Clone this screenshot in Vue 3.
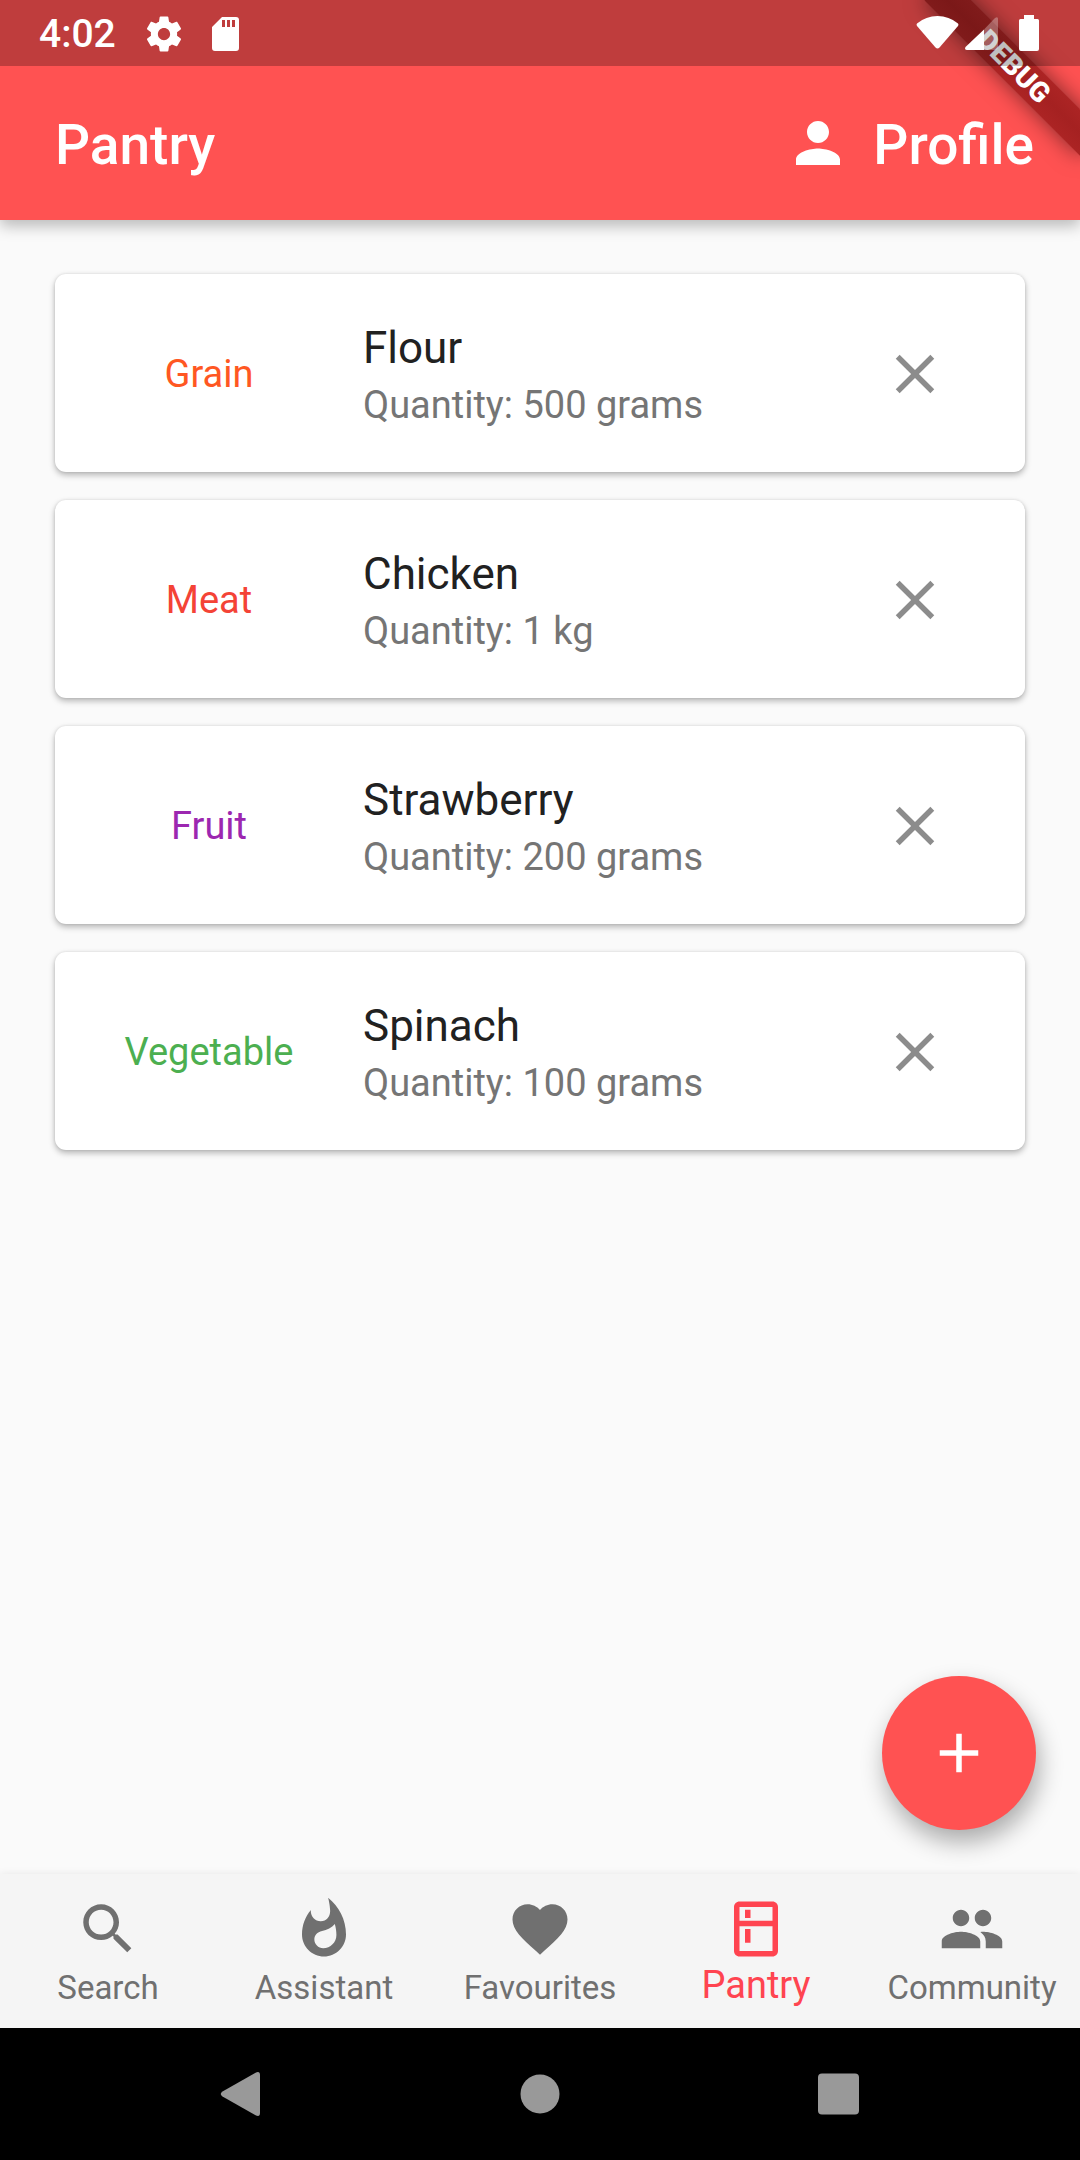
<script setup>
import { ref } from 'vue'

const items = ref([
  { category: 'Grain', tone: 'grain', name: 'Flour', quantity: '500 grams' },
  { category: 'Meat', tone: 'meat', name: 'Chicken', quantity: '1 kg' },
  { category: 'Fruit', tone: 'fruit', name: 'Strawberry', quantity: '200 grams' },
  { category: 'Vegetable', tone: 'vegetable', name: 'Spinach', quantity: '100 grams' },
])

const tabs = [
  {
    label: 'Search',
    icon: 'M15.5 14h-.79l-.28-.27C15.41 12.59 16 11.11 16 9.5 16 5.91 13.09 3 9.5 3S3 5.91 3 9.5 5.91 16 9.5 16c1.61 0 3.09-.59 4.23-1.57l.27.28v.79l5 4.99L20.49 19l-4.99-5zm-6 0C7.01 14 5 11.99 5 9.5S7.01 5 9.5 5 14 7.01 14 9.5 11.99 14 9.5 14z',
  },
  {
    label: 'Assistant',
    icon: 'M13.5.67s.74 2.65.74 4.8c0 2.06-1.35 3.73-3.41 3.73-2.07 0-3.63-1.67-3.63-3.73l.03-.36C5.21 7.51 4 10.62 4 14c0 4.42 3.58 8 8 8s8-3.58 8-8C20 8.61 17.41 3.8 13.5.67zM11.71 19c-1.78 0-3.22-1.4-3.22-3.14 0-1.62 1.05-2.76 2.81-3.12 1.77-.36 3.6-1.21 4.62-2.58.39 1.29.59 2.65.59 4.04 0 2.65-2.15 4.8-4.8 4.8z',
  },
  {
    label: 'Favourites',
    icon: 'M12 21.35l-1.45-1.32C5.4 15.36 2 12.28 2 8.5 2 5.42 4.42 3 7.5 3c1.74 0 3.41.81 4.5 2.09C13.09 3.81 14.76 3 16.5 3 19.58 3 22 5.42 22 8.5c0 3.78-3.4 6.86-8.55 11.54L12 21.35z',
  },
  {
    label: 'Pantry',
    active: true,
    icon: 'M18 2.01L6 2c-1.1 0-2 .89-2 2v16c0 1.1.9 2 2 2h12c1.1 0 2-.9 2-2V4c0-1.11-.9-1.99-2-1.99zM18 20H6v-9.02h12V20zm0-11H6V4h12v5zM8 5h2v3H8zm0 7h2v5H8z',
  },
  {
    label: 'Community',
    icon: 'M16 11c1.66 0 2.99-1.34 2.99-3S17.66 5 16 5s-3 1.34-3 3 1.34 3 3 3zm-8 0c1.66 0 2.99-1.34 2.99-3S9.66 5 8 5 5 6.34 5 8s1.34 3 3 3zm0 2c-2.33 0-7 1.17-7 3.5V19h14v-2.5c0-2.33-4.67-3.5-7-3.5zm8 0c-.29 0-.62.02-.97.05 1.16.84 1.97 1.97 1.97 3.45V19h6v-2.5c0-2.33-4.67-3.5-7-3.5z',
  },
]

function remove(index) {
  items.value.splice(index, 1)
}
</script>

<template>
  <div class="screen">
    <header class="top">
      <div class="app-bar">
        <h1 class="title">Pantry</h1>
        <button class="profile" type="button">
          <svg class="icon" viewBox="0 0 24 24" aria-hidden="true">
            <path d="M12 12c2.21 0 4-1.79 4-4s-1.79-4-4-4-4 1.79-4 4 1.79 4 4 4zm0 2c-2.67 0-8 1.34-8 4v2h16v-2c0-2.66-5.33-4-8-4z" />
          </svg>
          <span class="profile-label">Profile</span>
        </button>
      </div>
      <div class="ribbon-corner"><span class="ribbon">DEBUG</span></div>
      <div class="status-bar">
        <div class="status-left">
          <time class="clock">4:02</time>
          <svg class="status-icon" viewBox="0 0 24 24" aria-hidden="true">
            <path d="M19.43 12.98c.04-.32.07-.64.07-.98s-.03-.66-.07-.98l2.11-1.65c.19-.15.24-.42.12-.64l-2-3.46c-.12-.22-.39-.3-.61-.22l-2.49 1c-.52-.4-1.08-.73-1.69-.98l-.38-2.65C14.46 2.18 14.25 2 14 2h-4c-.25 0-.46.18-.49.42l-.38 2.65c-.61.25-1.17.59-1.69.98l-2.49-1c-.23-.09-.49 0-.61.22l-2 3.46c-.13.22-.07.49.12.64l2.11 1.65c-.04.32-.07.65-.07.98s.03.66.07.98l-2.11 1.65c-.19.15-.24.42-.12.64l2 3.46c.12.22.39.3.61.22l2.49-1c.52.4 1.08.73 1.69.98l.38 2.65c.03.24.24.42.49.42h4c.25 0 .46-.18.49-.42l.38-2.65c.61-.25 1.17-.59 1.69-.98l2.49 1c.23.09.49 0 .61-.22l2-3.46c.12-.22.07-.49-.12-.64l-2.11-1.65zM12 15.5c-1.93 0-3.5-1.57-3.5-3.5s1.57-3.5 3.5-3.5 3.5 1.57 3.5 3.5-1.57 3.5-3.5 3.5z" />
          </svg>
          <svg class="status-icon" viewBox="0 0 42 42" aria-hidden="true">
            <path fill-rule="evenodd" d="M18 4h14q3 0 3 3v28q0 3-3 3H11q-3 0-3-3V14zM18 7v7h3V7zM23 7v7h3V7zM28 7v7h3V7z" />
          </svg>
        </div>
        <svg class="status-right" viewBox="0 0 124 38" aria-hidden="true">
          <path d="M1 8.500Q10 1 21.500 1T42 8.500Q43 9.500 42 11L23.500 32.500Q21.500 34.500 19.500 32.500L1 11Q0 9.500 1 8.500z" />
          <path opacity=".3" d="M68 14.500L79 3Q82 1 82 4V32q0 3-3 3H68z" />
          <path d="M68 14.500V35H51q-3-.5-1.500-3z" />
          <path d="M108 0h10v4h3.500q1.500 0 1.500 1.500V34q0 2-2 2h-16q-2 0-2-2V5.500q0-1.500 1.500-1.500h3.500z" />
        </svg>
      </div>
    </header>

    <main class="content">
      <ul class="list">
        <li v-for="(item, i) in items" :key="item.name" class="card">
          <span class="category" :class="item.tone">{{ item.category }}</span>
          <div class="details">
            <h2 class="name">{{ item.name }}</h2>
            <p class="quantity">Quantity: {{ item.quantity }}</p>
          </div>
          <button class="remove" type="button" :aria-label="`Remove ${item.name}`" @click="remove(i)">
            <svg class="icon" viewBox="0 0 24 24" aria-hidden="true">
              <path d="M19 6.410L17.590 5 12 10.590 6.410 5 5 6.410 10.590 12 5 17.590 6.410 19 12 13.410 17.590 19 19 17.590 13.410 12z" />
            </svg>
          </button>
        </li>
      </ul>
      <button class="fab" type="button" aria-label="Add item">
        <svg class="icon" viewBox="0 0 24 24" aria-hidden="true">
          <path d="M19 13h-6v6h-2v-6H5v-2h6V5h2v6h6v2z" />
        </svg>
      </button>
    </main>

    <nav class="tabs">
      <a v-for="tab in tabs" :key="tab.label" class="tab" :class="{ active: tab.active }" href="#">
        <svg class="icon" viewBox="0 0 24 24" aria-hidden="true"><path :d="tab.icon" /></svg>
        <span class="tab-label">{{ tab.label }}</span>
      </a>
    </nav>

    <footer class="system-nav">
      <button class="system-button" type="button" aria-label="Back">
        <svg class="system-icon" viewBox="0 0 48 48" aria-hidden="true">
          <path d="M5.500 21.500L39 2.500Q43 1 43 5V43Q43 47 39 45.500L5.500 26.500Q2 24 5.500 21.500z" />
        </svg>
      </button>
      <button class="system-button" type="button" aria-label="Home">
        <svg class="system-icon" viewBox="0 0 48 48" aria-hidden="true"><circle cx="24" cy="24" r="19.500" /></svg>
      </button>
      <button class="system-button" type="button" aria-label="Recent apps">
        <svg class="system-icon" viewBox="0 0 48 48" aria-hidden="true"><rect x="3" y="3.500" width="41" height="41" rx="4" /></svg>
      </button>
    </footer>
  </div>
</template>

<style>
body {
  margin: 0;
  background: #fafafa;
}
</style>

<style scoped>
.screen {
  display: flex;
  flex-direction: column;
  min-height: 100vh;
  font-family: Roboto, "Liberation Sans", sans-serif;
  background: #fafafa;
}

button {
  padding: 0;
  border: 0;
  background: none;
  font: inherit;
  color: inherit;
  cursor: pointer;
}

svg {
  display: block;
  fill: currentColor;
}

.icon {
  width: 66px;
  height: 66px;
}

.top {
  position: relative;
  z-index: 1;
  padding-top: 66px;
  color: #fff;
  background: #ff5252;
  box-shadow: 0 6px 14px rgba(0, 0, 0, 0.26);
}

.status-bar {
  position: absolute;
  inset: 0 0 auto;
  box-sizing: border-box;
  display: flex;
  align-items: center;
  justify-content: space-between;
  height: 66px;
  padding: 2px 40px 0 39px;
  background: rgba(0, 0, 0, 0.25);
}

.status-left {
  display: flex;
  align-items: center;
  gap: 19px;
}

.clock {
  margin-right: 8px;
  font-size: 39px;
  font-weight: 500;
}

.status-icon {
  width: 42px;
  height: 42px;
}

.status-right {
  width: 124px;
  height: 38px;
}

.app-bar {
  display: flex;
  align-items: center;
  justify-content: space-between;
  height: 154px;
  padding: 0 46px 0 55px;
}

.title {
  margin: 0;
  padding-top: 4px;
  font-size: 55px;
  font-weight: 500;
}

.profile {
  display: flex;
  align-items: center;
  gap: 22px;
  font-size: 55px;
  font-weight: 500;
}

.profile-label {
  padding-top: 4px;
}

.ribbon-corner {
  position: absolute;
  top: 0;
  right: 0;
  width: 220px;
  height: 220px;
  overflow: hidden;
  pointer-events: none;
}

.ribbon {
  position: absolute;
  top: 50px;
  right: -44px;
  width: 220px;
  font-size: 28px;
  font-weight: 900;
  line-height: 33px;
  text-align: center;
  background: linear-gradient(#ac2424, #a52121 50%, #ac2424);
  box-shadow: 0 0 22px rgba(0, 0, 0, 0.5);
  transform: rotate(45deg);
}

.content {
  position: relative;
  flex: 1;
  padding: 54px 55px;
}

.list {
  display: flex;
  flex-direction: column;
  gap: 28px;
  margin: 0;
  padding: 0;
  list-style: none;
}

.card {
  box-sizing: border-box;
  display: flex;
  align-items: center;
  height: 198px;
  padding: 2px 44px 0 0;
  border-radius: 11px;
  background: #fff;
  box-shadow: 0 3px 6px rgba(0, 0, 0, 0.28), 0 0 3px rgba(0, 0, 0, 0.1);
}

.category {
  width: 308px;
  font-size: 38px;
  text-align: center;
}

.grain {
  color: #ff5722;
}

.meat {
  color: #f44336;
}

.fruit {
  color: #9c27b0;
}

.vegetable {
  color: #4caf50;
}

.details {
  flex: 1;
  padding-top: 4px;
}

.name {
  margin: 0;
  font-size: 44px;
  font-weight: 400;
  line-height: 58px;
  color: #212121;
}

.quantity {
  margin: 0;
  font-size: 38px;
  line-height: 56px;
  color: #757575;
}

.remove {
  display: grid;
  place-items: center;
  width: 132px;
  height: 132px;
  color: #8c8c8c;
}

.fab {
  position: absolute;
  right: 44px;
  bottom: 44px;
  display: grid;
  place-items: center;
  width: 154px;
  height: 154px;
  border-radius: 50%;
  color: #fff;
  background: #ff5252;
  box-shadow: 3px 12px 24px rgba(0, 0, 0, 0.32);
}

.tabs {
  position: relative;
  display: flex;
  height: 154px;
  background: #f5f5f5;
  box-shadow: 0 0 8px rgba(0, 0, 0, 0.08);
}

.tab {
  flex: 1;
  display: flex;
  flex-direction: column;
  align-items: center;
  padding-top: 22px;
  color: #707070;
  text-decoration: none;
}

.tab-label {
  font-size: 33px;
  line-height: 52px;
}

.active {
  color: #ff4450;
}

.active .tab-label {
  font-size: 38px;
  line-height: 46px;
}

.system-nav {
  position: relative;
  display: flex;
  justify-content: center;
  height: 132px;
  color: #999;
  background: #000;
}

.system-button {
  display: grid;
  place-items: center;
  width: 299px;
}

.system-icon {
  width: 48px;
  height: 48px;
}
</style>
